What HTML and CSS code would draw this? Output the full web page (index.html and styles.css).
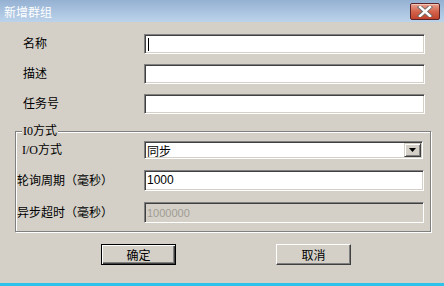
FILE: index.html
```html
<!DOCTYPE html>
<html lang="zh-CN">
<head>
    <meta charset="UTF-8">
    <title>新增群组</title>
    <link rel="stylesheet" href="styles.css">
</head>
<body>
    <div class="window">
        <div class="titlebar">
            <span class="title">新增群组</span>
            <button class="close">
                <svg width="18" height="11" viewBox="0 0 18 11">
                    <path d="M4 1 L14 10 M14 1 L4 10" stroke="#6a6a6a" stroke-width="4.2" stroke-linecap="square"/>
                    <path d="M4 1 L14 10 M14 1 L4 10" stroke="#fff" stroke-width="2.4" stroke-linecap="square"/>
                </svg>
            </button>
        </div>
        <div class="content">
            <div class="rows">
                <label>名称</label>
                <div class="field"><span class="caret"></span></div>
                <label>描述</label>
                <div class="field"></div>
                <label>任务号</label>
                <div class="field"></div>
            </div>

            <fieldset class="group">
                <legend>I0方式</legend>
                <div class="group-rows">
                    <label>I/O方式</label>
                    <div class="combo">
                        <span class="combo-text">同步</span>
                        <span class="combo-btn">
                            <svg width="7" height="4" viewBox="0 0 7 4"><path d="M0 0 H7 L3.5 4 Z" fill="#000"/></svg>
                        </span>
                    </div>
                    <label class="wide">轮询周期（毫秒）</label>
                    <div class="field num">1000</div>
                    <label class="wide">异步超时（毫秒）</label>
                    <div class="field num disabled">1000000</div>
                </div>
            </fieldset>

            <div class="actions">
                <button class="btn default">确定</button>
                <button class="btn">取消</button>
            </div>
        </div>
    </div>
</body>
</html>
```

FILE: styles.css
```css
*{
    box-sizing: border-box;
}
body{
    margin: 0;
    font-family: "Liberation Serif", "Noto Sans CJK SC", serif;
    font-size: 12px;
    color: #000;
    background-color: #d4d0c8;
}
.window{
    width: 444px;
    height: 286px;
    background-color: #d4d0c8;
    border-bottom: 3px solid #2cc2ea;
}
.titlebar{
    height: 22px;
    display: flex;
    align-items: center;
    justify-content: space-between;
    padding: 0 4px 0 4px;
    background: linear-gradient(#95b1d2, #bcd3eb);
}
.title{
    color: #fff;
    font-family: "Noto Sans CJK SC", sans-serif;
    font-size: 12px;
    line-height: 14px;
    margin-top: 1px;
}
.close{
    width: 30px;
    height: 17px;
    margin-top: 1px;
    padding: 0;
    display: flex;
    align-items: center;
    justify-content: center;
    border: 1px solid #5c2426;
    border-radius: 2px;
    background: linear-gradient(#e8a190, #d4644c 50%, #c0432c);
    box-shadow: inset 0 1px 0 #f3c4b8;
}

.rows{
    display: grid;
    grid-template-columns: 121px 281px;
    grid-auto-rows: 20px;
    row-gap: 10px;
    align-items: center;
    padding: 12px 0 0 23px;
}
label{
    font-family: "Liberation Serif", "Noto Sans CJK SC", serif;
    font-size: 12px;
    line-height: 14px;
}
.field{
    height: 100%;
    background-color: #fff;
    border: 1px solid;
    border-color: #808080 #fff #fff #808080;
    box-shadow: inset 1px 1px 0 #404040, inset -1px -1px 0 #d4d0c8;
    padding: 2px 0 0 3px;
}
.caret{
    display: block;
    width: 1px;
    height: 13px;
    margin-top: 1px;
    background-color: #000;
}
.num{
    font-family: "Liberation Sans", sans-serif;
    font-size: 12px;
    line-height: 15px;
    padding: 2px 0 0 2px;
}
.disabled{
    background-color: #d4d0c8;
    color: #a09c94;
    font-size: 11px;
    padding-top: 3px;
}

.group{
    margin: 10px 13px 0 15px;
    padding: 3px 6px 8px 6px;
    border: 1px solid #808080;
    box-shadow: 1px 1px 0 #fff, inset 1px 1px 0 #fff;
}
.group legend{
    padding: 0 1px;
    margin-left: 0;
    font-size: 12px;
    line-height: 14px;
    background-color: #d4d0c8;
}
.group-rows{
    display: grid;
    grid-template-columns: 122px 280px;
    grid-template-rows: 18px 21px 21px;
    row-gap: 11px;
    align-items: center;
}
.group-rows .wide{
    margin-left: -5px;
}
.combo{
    width: 279px;
    height: 100%;
    display: flex;
    justify-content: space-between;
    background-color: #fff;
    border: 1px solid;
    border-color: #808080 #fff #fff #808080;
    box-shadow: inset 1px 1px 0 #404040, inset -1px -1px 0 #d4d0c8;
    padding: 1px 1px 1px 2px;
}
.combo-text{
    font-family: "Noto Sans CJK SC", sans-serif;
    font-size: 12px;
    line-height: 15px;
}
.combo-btn{
    width: 17px;
    display: flex;
    align-items: center;
    justify-content: center;
    background-color: #d4d0c8;
    border: 1px solid;
    border-color: #d4d0c8 #404040 #404040 #d4d0c8;
    box-shadow: inset 1px 1px 0 #fff, inset -1px -1px 0 #808080;
}

.actions{
    display: flex;
    gap: 100px;
    padding: 12px 0 0 101px;
}
.btn{
    width: 75px;
    height: 21px;
    padding: 0;
    font-family: "Noto Sans CJK SC", sans-serif;
    font-size: 12px;
    line-height: 14px;
    color: #000;
    background-color: #d4d0c8;
    border: 1px solid;
    border-color: #fff #404040 #404040 #fff;
    box-shadow: inset -1px -1px 0 #808080;
}
.btn.default{
    border-color: #000;
    box-shadow: inset 1px 1px 0 #fff, inset -1px -1px 0 #404040, inset -2px -2px 0 #808080;
}
```
